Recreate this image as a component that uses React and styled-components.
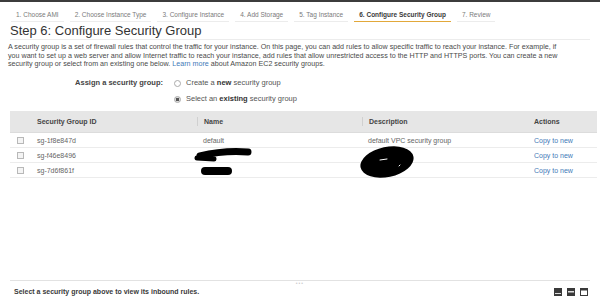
import React from 'react';
import styled, { createGlobalStyle } from 'styled-components';

const GlobalStyle = createGlobalStyle`
  html, body {
    margin: 0;
    padding: 0;
    background: #fff;
    font-family: 'Liberation Sans', Arial, sans-serif;
  }
`

const Page = styled.div`
  width: 600px;
  height: 302px;
  display: flex;
  flex-direction: column;
  overflow: hidden;
`

const TopBar = styled.div`
  height: 2px;
  background: #3c3c3c;
`

const Tabs = styled.div`
  display: flex;
  padding: 8px 0 0 11px;
`

const Tab = styled.div`
  font-size: 6.5px;
  line-height: 9px;
  color: ${p => (p.active ? '#3a3a3a' : '#7a7a7a')};
  font-weight: ${p => (p.active ? 'bold' : 'normal')};
  padding: 0 5px 2px;
  margin-right: 6px;
  border-bottom: 1px solid ${p => (p.active ? '#e2a83a' : '#ececec')};
  white-space: nowrap;
`

const Title = styled.h1`
  margin: 2px 10px 0;
  padding-bottom: 1px;
  font-size: 13px;
  line-height: 14px;
  font-weight: normal;
  color: #333;
  border-bottom: 1px solid #ececec;
`

const Intro = styled.p`
  margin: 3px 8px 0;
  font-size: 7.15px;
  line-height: 8.7px;
  color: #4a4a4a;
  white-space: nowrap;
`

const Link = styled.a`
  color: #3f7ab8;
  text-decoration: none;
`

const Assign = styled.div`
  display: grid;
  grid-template-columns: 163px 1fr;
  column-gap: 11px;
  row-gap: 4px;
  margin-top: 8px;
`

const AssignLabel = styled.div`
  font-size: 7.5px;
  line-height: 12px;
  font-weight: bold;
  color: #444;
  text-align: right;
`

const Option = styled.label`
  grid-column: 2;
  display: flex;
  align-items: center;
  gap: 5px;
  font-size: 7.5px;
  line-height: 12px;
  color: #555;
  b {
    color: #333;
  }
`

const Radio = styled.span`
  width: 5px;
  height: 5px;
  border-radius: 50%;
  border: 1px solid #aaa;
  background: ${p => (p.checked ? 'radial-gradient(circle, #555 45%, #ddd 55%)' : '#fff')};
`

const Table = styled.div`
  margin: 6px 3px 0 10px;
`

const Row = styled.div`
  display: grid;
  grid-template-columns: 20px 167px 165px 166px 1fr;
  align-items: center;
  height: ${p => (p.head ? '22px' : '15px')};
  background: ${p => (p.head ? '#e6e6e6' : '#fff')};
  border-bottom: 1px solid ${p => (p.head ? '#dcdcdc' : '#ececec')};
  box-sizing: border-box;
`

const Cell = styled.div`
  font-size: 7px;
  line-height: 9px;
  padding-left: ${p => (p.first ? '7px' : '6px')};
  color: ${p => (p.head ? '#444' : p.link ? '#3f7ab8' : '#666')};
  font-weight: ${p => (p.head ? 'bold' : 'normal')};
  border-left: ${p => (p.divider ? '1px solid #d0d0d0' : 'none')};
  white-space: nowrap;
`

const Check = styled.span`
  display: block;
  margin-left: 7px;
  width: 5px;
  height: 5px;
  border: 1px solid #b8b8b8;
  background: #f4f4f4;
`

const Body = styled.div`
  position: relative;
`

const Redaction = styled.svg`
  position: absolute;
  left: 0;
  top: 0;
  pointer-events: none;
`

const Spacer = styled.div`
  flex: 1;
`

const Footer = styled.div`
  margin: 0 10px;
  border-top: 1px solid #e2e2e2;
  height: 21px;
  display: flex;
  flex-direction: column;
`

const Grip = styled.div`
  align-self: center;
  margin-top: 1px;
  font-size: 5px;
  line-height: 3px;
  letter-spacing: 1px;
  color: #ccc;
`

const FooterRow = styled.div`
  flex: 1;
  display: flex;
  align-items: center;
  justify-content: space-between;
  padding: 0 2px 4px 4px;
`

const FooterText = styled.div`
  font-size: 7px;
  font-weight: bold;
  color: #3a3a3a;
`

const Icons = styled.div`
  display: flex;
  gap: 5px;
`

const PanelIcon = ({ variant }) => (
  <svg width="8" height="8" viewBox="0 0 8 8">
    {variant === 'bottom' && (
      <>
        <rect x="0" y="0" width="8" height="8" fill="#3a3a3a" />
        <rect x="1" y="5" width="6" height="1" fill="#ddd" />
      </>
    )}
    {variant === 'middle' && (
      <>
        <rect x="0" y="0" width="8" height="8" fill="#3a3a3a" />
        <rect x="1" y="3" width="6" height="1.5" fill="#ddd" />
      </>
    )}
    {variant === 'top' && (
      <>
        <rect x="0.5" y="0.5" width="7" height="7" fill="#fff" stroke="#3a3a3a" />
        <rect x="0" y="0" width="8" height="2.5" fill="#3a3a3a" />
      </>
    )}
  </svg>
)

const steps = [
  '1. Choose AMI',
  '2. Choose Instance Type',
  '3. Configure Instance',
  '4. Add Storage',
  '5. Tag Instance',
  '6. Configure Security Group',
  '7. Review',
]

const groups = [
  { id: 'sg-1f8e847d', name: 'default', desc: 'default VPC security group' },
  { id: 'sg-f46e8496', name: '', desc: '' },
  { id: 'sg-7d6f861f', name: '', desc: '' },
]

function App() {
  return (
    <Page>
      <GlobalStyle />
      <TopBar />
      <Tabs>
        {steps.map((s, i) => (
          <Tab key={s} active={i === 5}>{s}</Tab>
        ))}
      </Tabs>
      <Title>Step 6: Configure Security Group</Title>
      <Intro>
        A security group is a set of firewall rules that control the traffic for your instance. On this page, you can add rules to allow specific traffic to reach your instance. For example, if
        <br />
        you want to set up a web server and allow Internet traffic to reach your instance, add rules that allow unrestricted access to the HTTP and HTTPS ports. You can create a new
        <br />
        security group or select from an existing one below. <Link>Learn more</Link> about Amazon EC2 security groups.
      </Intro>
      <Assign>
        <AssignLabel>Assign a security group:</AssignLabel>
        <Option style={{ gridRow: 1 }}>
          <Radio />
          <span>Create a <b>new</b> security group</span>
        </Option>
        <Option>
          <Radio checked />
          <span>Select an <b>existing</b> security group</span>
        </Option>
      </Assign>
      <Table>
        <Row head>
          <Cell head />
          <Cell head first>Security Group ID</Cell>
          <Cell head divider>Name</Cell>
          <Cell head divider>Description</Cell>
          <Cell head>Actions</Cell>
        </Row>
        <Body>
          {groups.map(g => (
            <Row key={g.id}>
              <Check />
              <Cell first>{g.id}</Cell>
              <Cell>{g.name}</Cell>
              <Cell>{g.desc}</Cell>
              <Cell link>Copy to new</Cell>
            </Row>
          ))}
          <Redaction width="587" height="46" viewBox="0 0 587 46">
            <path d="M190 23 Q214 17 238 19" stroke="#000" strokeWidth="7" strokeLinecap="round" fill="none" />
            <path d="M187 25 L204 26" stroke="#000" strokeWidth="5" strokeLinecap="round" fill="none" />
            <path d="M195 38 L218 38" stroke="#000" strokeWidth="8" strokeLinecap="round" fill="none" />
            <ellipse cx="377" cy="29" rx="27" ry="15" transform="rotate(-12 377 29)" fill="#000" />
            <path d="M370 27 L377 26" stroke="#fff" strokeWidth="1" strokeLinecap="round" />
            <path d="M389 33 L390 32" stroke="#fff" strokeWidth="1" strokeLinecap="round" />
          </Redaction>
        </Body>
      </Table>
      <Spacer />
      <Footer>
        <Grip>•••</Grip>
        <FooterRow>
          <FooterText>Select a security group above to view its inbound rules.</FooterText>
          <Icons>
            <PanelIcon variant="bottom" />
            <PanelIcon variant="middle" />
            <PanelIcon variant="top" />
          </Icons>
        </FooterRow>
      </Footer>
    </Page>
  );
}

export default App;
